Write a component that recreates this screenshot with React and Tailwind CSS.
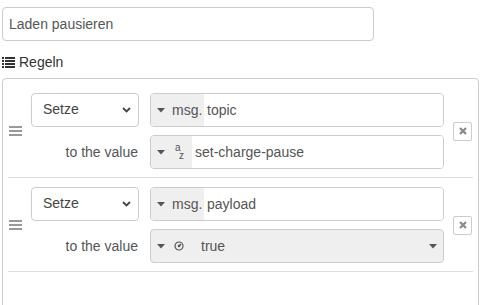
import React from 'react';

const font = { fontFamily: '"Liberation Sans", Arial, sans-serif' };

function Caret({ className = '' }) {
  return (
    <svg width="8" height="5" viewBox="0 0 8 5" className={className}>
      <path d="M0 0 L8 0 L4 4.5 Z" fill="#555" />
    </svg>
  );
}

function Chevron() {
  return (
    <svg width="9" height="6" viewBox="0 0 9 6">
      <path d="M1 1 L4.5 4.5 L8 1" fill="none" stroke="#444" strokeWidth="1.8" />
    </svg>
  );
}

function ListIcon() {
  return (
    <svg width="13" height="11" viewBox="0 0 13 11">
      {[0, 3, 6, 9].map(y => (
        <g key={y} fill="#333">
          <rect x="0" y={y} width="2" height="2" />
          <rect x="3" y={y} width="10" height="2" />
        </g>
      ))}
    </svg>
  );
}

function Handle() {
  return (
    <svg width="13" height="10" viewBox="0 0 13 10">
      <g fill="#999">
        <rect x="0" y="0" width="13" height="2" />
        <rect x="0" y="4" width="13" height="2" />
        <rect x="0" y="8" width="13" height="2" />
      </g>
    </svg>
  );
}

function BoolIcon() {
  return (
    <svg width="10" height="10" viewBox="0 0 10 10">
      <circle cx="5" cy="5" r="4" fill="none" stroke="#555" strokeWidth="1.2" />
      <path d="M5 5 L7 3" stroke="#555" strokeWidth="1.6" />
      <circle cx="5" cy="5" r="1.3" fill="#555" />
    </svg>
  );
}

function AzIcon() {
  return (
    <span className="relative inline-block h-[16px] w-[10px] text-[#555]">
      <span className="absolute left-0 top-0 text-[10px] leading-[8px]">a</span>
      <span className="absolute left-[4px] top-[8px] text-[10px] leading-[8px]">z</span>
    </span>
  );
}

function DeleteBtn() {
  return (
    <div className="flex h-[19px] w-[19px] items-center justify-center rounded-[2px] border border-[#ccc] bg-white">
      <svg width="8" height="8" viewBox="0 0 8 8">
        <path d="M1 1 L7 7 M7 1 L1 7" stroke="#888" strokeWidth="2.2" />
      </svg>
    </div>
  );
}

function Rule({ prop, valueType, value }) {
  const isBool = valueType === 'bool';
  return (
    <div className="ml-[5px] flex w-[465px] items-center border-b border-[#ddd] pt-[9px] pb-[8px]">
      <div className="ml-[1px] mr-[9px] flex w-[13px] items-center">
        <Handle />
      </div>
      <div className="flex w-[108px] flex-col">
        <div className="-mt-px flex h-[34px] items-center justify-between rounded-[4px] border border-[#ccc] bg-white pl-[11px] pr-[7px] text-[14px] text-[#444]">
          <span>Setze</span>
          <Chevron />
        </div>
        <div className="mt-[9px] flex h-[33px] items-center justify-end pr-px text-[14px] text-[#555]">to the value</div>
      </div>
      <div className="ml-[11px] flex w-[294px] flex-col gap-[8px]">
        <div className="flex h-[34px] overflow-hidden rounded-[4px] border border-[#ccc] text-[14px] text-[#555]">
          <div className="flex w-[53px] items-center bg-[#efefef] pl-[6px]">
            <Caret />
            <span className="ml-[7px]">msg.</span>
          </div>
          <div className="flex flex-1 items-center bg-white pl-[3px]">{prop}</div>
        </div>
        {isBool ? (
          <div className="flex h-[34px] items-center rounded-[4px] border border-[#ccc] bg-[#efefef] pl-[6px] pr-[6px] text-[14px] text-[#555]">
            <Caret />
            <span className="ml-[9px] flex"><BoolIcon /></span>
            <span className="ml-[17px] flex-1">{value}</span>
            <Caret />
          </div>
        ) : (
          <div className="flex h-[34px] overflow-hidden rounded-[4px] border border-[#ccc] text-[14px] text-[#555]">
            <div className="flex w-[41px] items-center bg-[#efefef] pl-[6px]">
              <Caret />
              <span className="ml-[10px] flex"><AzIcon /></span>
            </div>
            <div className="flex flex-1 items-center bg-white pl-[3px]">{value}</div>
          </div>
        )}
      </div>
      <div className="ml-[9px]">
        <DeleteBtn />
      </div>
    </div>
  );
}

export default function App() {
  return (
    <div className="h-[305px] w-[487px] overflow-hidden bg-white" style={font}>
      <div className="ml-[2px] mt-[7px] flex h-[34px] w-[372px] items-center rounded-[4px] border border-[#ccc] pl-[6px] text-[14px] text-[#555]">
        Laden pausieren
      </div>
      <div className="ml-[2px] mt-[14px] flex h-[15px] items-center gap-[4px] text-[14px] text-[#333]">
        <ListIcon />
        <span>Regeln</span>
      </div>
      <div className="ml-[2px] mt-[8px] h-[260px] w-[477px] rounded-[4px] border border-[#ccc] pt-[5px]">
        <Rule prop="topic" valueType="str" value="set-charge-pause" />
        <Rule prop="payload" valueType="bool" value="true" />
      </div>
    </div>
  );
}
